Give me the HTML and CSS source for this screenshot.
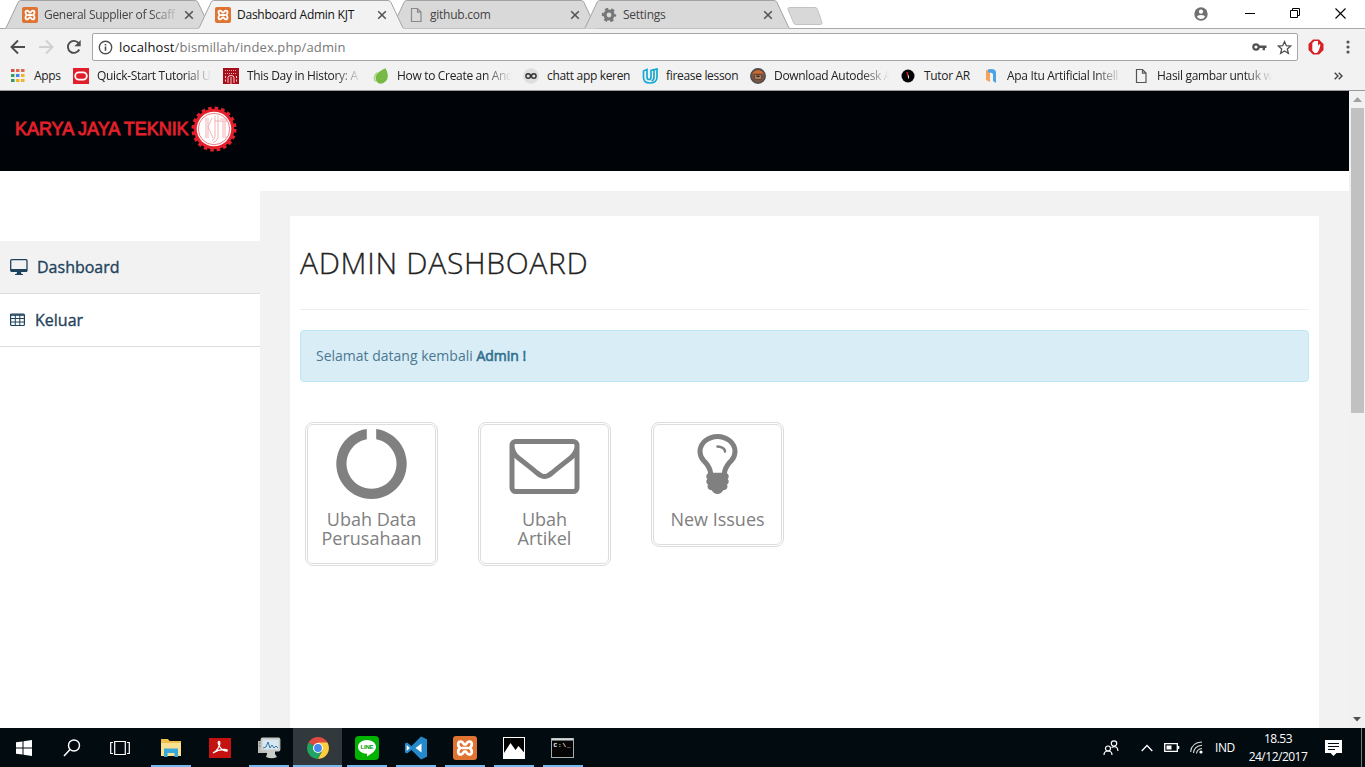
FILE: index.html
```html
<!DOCTYPE html>
<html lang="id">
<head>
<meta charset="utf-8">
<title>Dashboard Admin KJT</title>
<link rel="stylesheet" href="styles.css">
</head>
<body>
<svg class="defs" width="0" height="0">
  <symbol id="xampp" viewBox="0 0 16 16"><rect width="16" height="16" rx="2" fill="#df7332"/><path d="M5.400 3.700C3 3.300 2.800 6.800 5 8 2.800 9.200 3 12.700 5.400 12.300 7 12 6.700 10.300 8 10.300S9 12 10.600 12.300C13 12.700 13.200 9.200 11 8 13.200 6.800 13 3.300 10.600 3.700 9 4 9.300 5.700 8 5.700S7 4 5.400 3.700zM6 8h4" fill="none" stroke="#fff" stroke-width="1.800"/></symbol>
  <symbol id="file" viewBox="0 0 16 16"><path d="M3.500 1.500h6l3.500 3.500v9.500h-9.500zM9.500 1.500v3.700h3.500" fill="none" stroke="currentColor" stroke-width="1.200"/></symbol>
  <symbol id="close" viewBox="0 0 10 10"><path d="M1.200 1.200l7.600 7.600M8.800 1.200l-7.600 7.600" stroke="#555" stroke-width="1.600"/></symbol>
  <symbol id="tab" viewBox="0 0 206 29"><path d="M0 28.500L1.500 27 13 2.500Q14 .5 15.500 .5H190Q192 .5 193 2.500L204.500 27 206 28.500" stroke="#a3a3a3"/></symbol>
</svg>
<header class="browser">
  <div class="tabs">
    <div class="tab"><svg class="tab-bg"><use href="#tab"/></svg><svg class="ico"><use href="#xampp"/></svg><span class="tab-title t1">General Supplier of Scaff</span><svg class="x"><use href="#close"/></svg></div>
    <div class="tab active"><svg class="tab-bg"><use href="#tab"/></svg><svg class="ico"><use href="#xampp"/></svg><span class="tab-title t2">Dashboard Admin KJT</span><svg class="x"><use href="#close"/></svg></div>
    <div class="tab"><svg class="tab-bg"><use href="#tab"/></svg><svg class="ico grey"><use href="#file"/></svg><span class="tab-title t3">github.com</span><svg class="x"><use href="#close"/></svg></div>
    <div class="tab"><svg class="tab-bg"><use href="#tab"/></svg><svg class="ico" viewBox="0 0 16 16"><circle cx="8" cy="8" r="4" fill="none" stroke="#777" stroke-width="3.200"/><circle cx="8" cy="8" r="6" fill="none" stroke="#777" stroke-width="2.400" stroke-dasharray="3.200 3.083" stroke-dashoffset="1.600"/></svg><span class="tab-title t4">Settings</span><svg class="x"><use href="#close"/></svg></div>
    <svg class="newtab" viewBox="0 0 36 18"><path d="M3 .5h25q2 0 2.500 2L35 15.500q.5 2-1.500 2H9q-2 0-2.500-2L1 2.500Q.5 .5 3 .5z" fill="#d8d8d8" stroke="#c2c2c2"/></svg>
    <div class="window-buttons">
      <svg class="user" width="14" height="14" viewBox="0 0 14 14"><circle cx="7" cy="7" r="6.700" fill="#707070"/><circle cx="7" cy="4.700" r="2.100" fill="#fff"/><path d="M3 9.800Q3.300 8 7 8t4 1.800Q9.500 12 7 12T3 9.800z" fill="#fff"/></svg>
      <svg width="11" height="11" viewBox="0 0 11 11"><path d="M0 5.500h10" stroke="#000"/></svg>
      <svg width="11" height="11" viewBox="0 0 11 11"><path d="M.5 2.500h7v7h-7zM2.500 2.500v-2h7v7h-2" fill="none" stroke="#000"/></svg>
      <svg width="11" height="11" viewBox="0 0 11 11"><path d="M.5 .5l10 10M10.500 .5l-10 10" stroke="#000" stroke-width="1.100"/></svg>
    </div>
  </div>
  <div class="toolbar">
    <svg class="nav" viewBox="0 0 16 16"><path d="M15 8H2M8 1.500L1.500 8 8 14.500" fill="none" stroke="#4d4d4d" stroke-width="1.900"/></svg>
    <svg class="nav" viewBox="0 0 16 16"><path d="M1 8h13M8 1.500L14.500 8 8 14.500" fill="none" stroke="#d0d0d0" stroke-width="1.900"/></svg>
    <svg class="nav" viewBox="0 0 16 16"><path d="M13.300 10.500A6 6 0 1 1 12.500 4" fill="none" stroke="#4d4d4d" stroke-width="1.900"/><path d="M14.700 1v6.300H8.400z" fill="#4d4d4d"/></svg>
    <div class="address">
      <svg width="15" height="15" viewBox="0 0 15 15"><circle cx="7.500" cy="7.500" r="6.200" fill="none" stroke="#505050" stroke-width="1.400"/><path d="M7.500 6.600v4.200M7.500 3.900v1.600" stroke="#505050" stroke-width="1.600"/></svg>
      <span class="url"><b>localhost</b>/bismillah/index.php/admin</span>
      <svg width="15" height="14" viewBox="0 0 15 14"><circle cx="4" cy="7" r="2.700" fill="none" stroke="#505050" stroke-width="2.200"/><path d="M7 6.800h7.500M11.800 7v3.200" stroke="#505050" stroke-width="2.400"/></svg>
      <svg width="15" height="15" viewBox="0 0 15 15"><path d="M7.500 1.600l1.800 4.100 4.400.4-3.400 2.900 1.100 4.400-3.900-2.400-3.900 2.400 1.100-4.400L1.300 6.100l4.400-.4z" fill="none" stroke="#505050" stroke-width="1.300"/></svg>
    </div>
    <svg class="adblock" viewBox="0 0 16 16"><path d="M5 .5h6L15.500 5v6L11 15.500H5L.5 11V5z" fill="#d92027"/><path d="M4.300 4L6.500 2H10v5.500l1-2.500 1.500.8L11 11l-2 3H6.500L4.300 11.500z" fill="#fff"/></svg>
    <svg class="menu" width="4" height="14" viewBox="0 0 4 14"><g fill="#555"><circle cx="2" cy="2" r="1.600"/><circle cx="2" cy="7" r="1.600"/><circle cx="2" cy="12" r="1.600"/></g></svg>
  </div>
  <nav class="bookmarks">
    <a class="bm w62"><svg class="ico" viewBox="0 0 16 16"><path d="M0 1h3.500v3H0z" fill="#d85140"/><path d="M5 1h3.500v3H5zM10 1h3.500v3H10z" fill="#df6a50"/><path d="M0 6h3.500v3H0z" fill="#35a261"/><path d="M5 6h3.500v3H5z" fill="#4384ee"/><path d="M10 6h3.500v3H10zM5 11h3.500v3H5zM10 11h3.500v3H10z" fill="#f0b429"/><path d="M0 11h3.500v3H0z" fill="#2f9d5b"/></svg><span>Apps</span></a>
    <a class="bm w150"><svg class="ico" viewBox="0 0 16 16"><rect width="16" height="16" fill="#e11f2c"/><rect x="2.200" y="4.400" width="11.600" height="7.200" rx="3.600" fill="none" stroke="#fff" stroke-width="1.800"/></svg><span class="fade">Quick-Start Tutorial U</span></a>
    <a class="bm w150"><svg class="ico" viewBox="0 0 16 16"><rect width="16" height="16" fill="#a80d1c"/><path d="M2 2.500h12M2 5.500h12" stroke="#e9a6a6" stroke-dasharray="1 1"/><path d="M5 15V9.500q0-2 3-2t3 2V15M8 9v7M2.500 8v2M2.500 11.500v2M13.500 8v2M13.500 11.500v2" fill="none" stroke="#f2cccc"/></svg><span class="fade">This Day in History: A</span></a>
    <a class="bm w150"><svg class="ico" viewBox="0 0 16 16"><path d="M12.500 .3Q17 8 13 13 9.500 17 5 15 1 11 3.500 6.500 6 3 12.500 .3z" fill="#77b944"/><path d="M4.200 4.500Q-.5 9 2.500 13.500" fill="none" stroke="#acd784" stroke-width="1.500"/></svg><span class="fade">How to Create an And</span></a>
    <a class="bm w119"><svg class="ico" viewBox="0 0 16 16"><circle cx="8" cy="8" r="7.800" fill="#dedede"/><circle cx="5.200" cy="8" r="2.300" fill="none" stroke="#333" stroke-width="1.400"/><circle cx="10.800" cy="8" r="2.300" fill="none" stroke="#333" stroke-width="1.400"/></svg><span>chatt app keren</span></a>
    <a class="bm w108"><svg class="ico" viewBox="0 0 16 16"><path d="M1.500 3L5 1.500V9q0 2.500 2 2.500T9 9V2.500L15 1v8.500Q14.500 15 8 15 1.500 15 1.500 9.500zM12 2V9q0 3-2.500 4" fill="none" stroke="#17a9d1" stroke-width="1.700"/></svg><span>firease lesson</span></a>
    <a class="bm w150"><svg class="ico" viewBox="0 0 16 16"><circle cx="8" cy="8" r="7.200" fill="#7c5540" stroke="#4c4c50" stroke-width="1.500"/><path d="M2 5.500Q8-1 14 5.500z" fill="#d06a2b"/><path d="M4.500 6.500h7v5h-7z" fill="#a87b63" stroke="#6a4534"/><path d="M6.500 7.500h3v1.500h-3z" fill="#3b2118"/></svg><span class="fade">Download Autodesk A</span></a>
    <a class="bm w83"><svg class="ico" viewBox="0 0 16 16"><circle cx="8" cy="8" r="6.500" fill="#050505"/><path d="M7 4l1.400 5" stroke="#d02b2b" stroke-width="1.300"/><path d="M8.500 7.500v3" stroke="#ddd"/></svg><span>Tutor AR</span></a>
    <a class="bm w150"><svg class="ico" viewBox="0 0 16 16"><path d="M3 2.500L7 1v13l-4-2z" fill="#f5a35a"/><path d="M5 1.500Q12-.5 13 4v11l-3-2V6Q9.500 4 5 4.500z" fill="#4aa5e8"/></svg><span class="fade">Apa Itu Artificial Intell</span></a>
    <a class="bm w150"><svg class="ico dark"><use href="#file"/></svg><span class="fade">Hasil gambar untuk w</span></a>
    <svg class="more" width="9" height="8" viewBox="0 0 9 8"><path d="M.7 .7L4 4 .7 7.300M4.700 .7L8 4 4.700 7.300" fill="none" stroke="#444" stroke-width="1.400"/></svg>
  </nav>
</header>
<div class="viewport">
  <div class="page">
    <header class="brandbar">
      <span class="brand">KARYA JAYA TEKNIK</span>
      <svg class="gear" viewBox="0 0 46 46"><circle cx="23" cy="23" r="20.300" fill="#e3202b"/><circle cx="23" cy="23" r="20.800" fill="none" stroke="#e3202b" stroke-width="3.400" stroke-dasharray="3.600 2.934"/><circle cx="23" cy="23" r="17.300" fill="#fff"/><circle cx="23" cy="23" r="15.700" fill="#fff" stroke="#ee7d84" stroke-width="1"/><path d="M15 12v20M17 12v20M24 9.500v21q-.5 3-3 4M27 9.500v22q-1 4-5 5M21 12l-4 9 5 11M24 15h13M29 13h8M32 15v17M34 15v17" fill="none" stroke="#eda0a4" stroke-width=".8"/></svg>
    </header>
    <div class="columns">
      <aside class="sidebar">
        <a class="side-item current"><svg width="18" height="18" viewBox="0 0 18 18"><rect x=".7" y="1.700" width="16.300" height="11.500" rx="1" fill="none" stroke="#1f435c" stroke-width="1.300"/><path d="M1 11h16v3H1zM7 14h4l.5 2H13v1H5v-1h1.500z" fill="#1f435c"/></svg><span>Dashboard</span></a>
        <a class="side-item"><svg width="16" height="14" viewBox="0 0 16 14"><rect x=".6" y="1" width="13.800" height="11.500" rx="1" fill="none" stroke="#1f435c" stroke-width="1.200"/><path d="M1 2h13" stroke="#1f435c" stroke-width="1.600"/><path d="M1 5.500h13M1 9h13M5.300 2v10.500M9.800 2v10.500" stroke="#1f435c" stroke-width="1"/></svg><span>Keluar</span></a>
      </aside>
      <main class="content">
        <section class="panel">
          <h2>ADMIN DASHBOARD</h2>
          <hr>
          <div class="alert">Selamat datang kembali <strong>Admin !</strong></div>
          <div class="cards">
            <a class="card"><svg class="fa" viewBox="0 0 70 70"><path d="M30.300 0A35.200 35.200 0 1 0 39.700 0V10.200A25 25 0 1 1 30.300 10.200z" fill="#808080"/></svg><h4>Ubah Data Perusahaan</h4></a>
            <a class="card"><svg class="fa" viewBox="0 0 1792 1792"><path d="M1664 1504v-768q-32 36-69 66-268 206-426 338-51 43-83 67t-86.500 48.500-102.500 24.500h-2q-48 0-102.500-24.500t-86.500-48.500-83-67q-158-132-426-338-37-30-69-66v768q0 13 9.500 22.500t22.500 9.500h1472q13 0 22.500-9.500t9.500-22.500zm0-1051v-24.500l-.5-13-3-12.500-5.500-9-9-7.500-14-2.500h-1472q-13 0-22.500 9.500t-9.500 22.500q0 168 147 284 193 152 401 317 6 5 35 29.500t46 37.500 44.500 31.500 50.500 27.500 43 9h2q20 0 43-9t50.500-27.500 44.500-31.500 46-37.500 35-29.500q208-165 401-317 54-43 100.500-115.500t46.500-131.500zm128-37v1088q0 66-47 113t-113 47h-1472q-66 0-113-47t-47-113v-1088q0-66 47-113t113-47h1472q66 0 113 47t47 113z"/></svg><h4>Ubah Artikel</h4></a>
            <a class="card"><svg class="fa" viewBox="0 0 1792 1792"><path d="M1120 576q0 13-9.500 22.500t-22.500 9.500-22.500-9.500-9.500-22.500q0-46-54-71t-106-25q-13 0-22.500-9.500t-9.500-22.500 9.500-22.500 22.500-9.500q50 0 99.500 16t87 54 37.500 90zm160 0q0-72-34.500-134t-90-101.500-123-62-136.500-22.500-136.500 22.500-123 62-90 101.500-34.500 134q0 101 68 180 10 11 30.500 33t30.500 33q128 153 141 298h228q13-145 141-298 10-11 30.500-33t30.500-33q68-79 68-180zm128 0q0 155-103 268-45 49-74.500 87t-59.500 95.500-34 107.500q47 28 47 82 0 37-25 64 25 27 25 64 0 52-45 81 13 23 13 47 0 46-31.500 71t-77.500 25q-20 44-60 70t-87 26-87-26-60-70q-46 0-77.500-25t-31.500-71q0-24 13-47-45-29-45-81 0-37 25-64-25-27-25-64 0-54 47-82-4-50-34-107.500t-59.500-95.500-74.500-87q-103-113-103-268 0-99 44.500-184.500t117-142 164-89 186.500-32.500 186.500 32.500 164 89 117 142 44.500 184.500z"/></svg><h4>New Issues</h4></a>
          </div>
        </section>
      </main>
    </div>
  </div>
  <div class="scrollbar">
    <svg width="9" height="5" viewBox="0 0 9 5"><path d="M4.500 0L9 5H0z" fill="#a0a0a0"/></svg>
    <div class="thumb"></div>
    <svg class="down" width="8" height="5" viewBox="0 0 8 5"><path d="M0 0h8L4 4.500z" fill="#505050"/></svg>
  </div>
</div>
<footer class="taskbar">
  <div class="task sys"><svg width="16" height="16" viewBox="0 0 16 16"><path d="M0 2.300L6.500 1.400v6.100H0zM7.500 1.200L16 0v7.500H7.500zM0 8.500h6.500v6.100L0 13.700zM7.500 8.500H16V16l-8.500-1.200z" fill="#fff"/></svg></div>
  <div class="task sys"><svg width="18" height="18" viewBox="0 0 18 18"><circle cx="11" cy="6.500" r="5.500" fill="none" stroke="#fff" stroke-width="1.400"/><path d="M7 10.500L1 17" stroke="#fff" stroke-width="1.500"/></svg></div>
  <div class="task sys"><svg width="20" height="16" viewBox="0 0 20 16"><path d="M4.700 1.500h10.600v13H4.700zM3 2.500H.7v11H3M17 2.500h2.300v11H17" fill="none" stroke="#fff" stroke-width="1.200"/></svg></div>
  <div class="task open"><svg width="22" height="20" viewBox="0 0 22 20"><path d="M1 1h7l1.500 2H21v15H1z" fill="#eebf4a"/><path d="M1 5h20v13H1z" fill="#fae092"/><path d="M4 10.500h14V19h-3.500v-4h-7v4H4z" fill="#36a8dc"/></svg></div>
  <div class="task"><svg width="22" height="20" viewBox="0 0 22 20"><rect width="22" height="20" fill="#c3120f"/><path d="M4 15Q7 14 9.500 9.500 12 4 10 3.500 8 4 11 9q3 4.500 7 4 1-1.500-2.500-1.500Q9 11.500 4 15z" fill="none" stroke="#fff" stroke-width="1.300"/></svg></div>
  <div class="task open"><svg width="24" height="22" viewBox="0 0 24 22"><path d="M1 4h9v12H1z" fill="#b9bcb5"/><path d="M2 6h5M2 9h5" stroke="#676b6b"/><rect x="4.500" y="1.500" width="18" height="12" rx="1" fill="#d8e7f1" stroke="#c6c8c3" stroke-width="1.800"/><path d="M6 11l3-1 2-5 2 6 2-3 2 3 2-2 2 2" fill="none" stroke="#3476aa"/><path d="M10 14h8v3l2 3q-5 2.500-11 0l1-3z" fill="#c9cbc7"/></svg></div>
  <div class="task chrome"><svg width="22" height="22" viewBox="0 0 22 22"><path d="M11 11L1.500 5.500A11 11 0 0 1 20.500 5.500z" fill="#e04a3f"/><path d="M11 11L1.500 5.500A11 11 0 0 0 11 22l4-8z" fill="#21a464"/><path d="M11 11l4.500 2.500L11 22A11 11 0 0 0 20.500 5.500H11z" fill="#fccd3c"/><circle cx="11" cy="11" r="5" fill="#fff"/><circle cx="11" cy="11" r="3.900" fill="#4589ee"/></svg></div>
  <div class="task open"><svg width="24" height="24" viewBox="0 0 24 24"><rect width="24" height="24" rx="4" fill="#00b300"/><path d="M12 4c5 0 9 3 9 7 0 4.500-6 7.500-9 9.500v-2.700C7 17.500 3 15 3 11s4-7 9-7z" fill="#fff"/><text x="5.500" y="13.300" font-family="Liberation Sans" font-size="6" font-weight="700" fill="#00a000" textLength="13">LINE</text></svg></div>
  <div class="task open"><svg width="24" height="24" viewBox="0 0 24 24"><path d="M17 .5l6 2.700v17.600L17 23.500 7.500 14 3 17.500 1 16.500v-9l2-1L7.500 10z" fill="#2489ca"/><path d="M2.700 9l3.300 3-3.300 3zM17.500 7.500v9L11.500 12z" fill="#fff"/></svg></div>
  <div class="task open"><svg width="24" height="24"><use href="#xampp"/></svg></div>
  <div class="task open"><svg width="22" height="22" viewBox="0 0 22 22"><rect x=".5" y=".5" width="21" height="21" fill="#000" stroke="#fff"/><path d="M1 16L7.500 6l5 7 3-4 6 7v5.500H1z" fill="#fff"/></svg></div>
  <div class="task open"><svg width="23" height="20" viewBox="0 0 23 20"><rect x=".5" y=".5" width="22" height="19" fill="#050505" stroke="#a6abac"/><path d="M1 1.500h21" stroke="#d7dadb" stroke-width="2"/><text x="2.500" y="8.500" font-family="Liberation Mono" font-size="6" font-weight="700" fill="#fff" textLength="17">C:\_</text></svg></div>
  <div class="tray">
    <svg width="16" height="16" viewBox="0 0 16 16"><g fill="none" stroke="#fff" stroke-width="1.200"><circle cx="5" cy="8.500" r="2.500"/><path d="M1 15q0-4 4-4t4 4"/><circle cx="11" cy="3.500" r="2.700"/><path d="M8.500 7.500Q14.500 4.800 15 11"/></g></svg>
    <svg class="caret" width="12" height="8" viewBox="0 0 12 8"><path d="M.7 7L6 1.500 11.300 7" fill="none" stroke="#fff" stroke-width="1.300"/></svg>
    <svg class="battery" width="16" height="9" viewBox="0 0 16 9"><path d="M.7 .7h12.600v7.600H.7z" fill="none" stroke="#fff" stroke-width="1.300"/><path d="M2.500 2.500h5v4h-5zM14 3h1.300v3H14z" fill="#fff"/></svg>
    <svg class="wifi" width="13" height="13" viewBox="0 0 13 13"><g fill="none" stroke="#ddd" stroke-width="1.100"><path d="M.6 11Q1.500 1.500 12 1M3.500 12Q4 5 12 4.200M6.500 12.500Q7 8 12 7.500"/></g><circle cx="11" cy="11" r="1.600" fill="#fff"/></svg>
    <span class="lang">IND</span>
    <div class="clock"><span class="time">18.53</span><span class="date">24/12/2017</span></div>
    <svg class="note" width="17" height="16" viewBox="0 0 17 16"><path d="M0 0h17v13h-5.500L8.500 16l-3-3H0z" fill="#fff"/><path d="M3 3.500h11M3 6.500h11M3 9.500h7" stroke="#020b10" stroke-width="1.100"/></svg>
    <div class="peek"></div>
  </div>
</footer>
</body>
</html>
```

FILE: styles.css
```css
* { box-sizing: border-box; }
body { margin: 0; width: 1365px; height: 767px; overflow: hidden; display: flex; flex-direction: column; background: #fff; font-family: "Open Sans", sans-serif; font-size: 12px; color: #222; }
svg { display: block; flex: none; }
.defs { position: absolute; }
.ico { width: 16px; height: 16px; }
.grey { color: #8a8a8a; }
.dark { color: #555; }

.browser { height: 91px; flex: none; background: #f2f2f2; border-bottom: 1px solid #999; }
.tabs { height: 29px; display: flex; background: linear-gradient(#fff 28px, #a9a9a9 28px); padding-left: 5px; }
.tab { position: relative; width: 206px; height: 29px; margin-right: -13px; padding: 1px 0 0 17px; display: flex; align-items: center; color: #444; }
.tab-bg { position: absolute; left: 0; top: 0; width: 206px; height: 29px; z-index: 0; fill: #d9d9d9; }
.tab > :not(.tab-bg) { position: relative; z-index: 1; }
.tab.active { z-index: 2; color: #111; }
.tab.active .tab-bg { fill: #f2f2f2; }
.tab.active::after { content: ""; position: absolute; left: 1px; right: 1px; bottom: 0; height: 1px; background: #f2f2f2; }
.tab-title { width: 136px; margin: 0 4px 2px 6px; white-space: nowrap; }
.x { width: 10px; height: 10px; }
.t1 { letter-spacing: -.3px; -webkit-mask-image: linear-gradient(90deg, #000 78%, transparent); }
.t2, .t3, .t4 { letter-spacing: -.25px; }
.newtab { width: 36px; height: 18px; margin: 7px 0 0 10px; }
.window-buttons { margin-left: auto; display: flex; align-items: center; height: 27px; gap: 34px; padding-right: 19px; }
.user { margin-right: 3px; }

.toolbar { height: 32px; display: flex; align-items: center; padding: 4px 15px 0 10px; }
.nav { width: 16px; height: 16px; margin-right: 12px; }
.nav:nth-child(3) { margin-right: 10px; }
.address { width: 1206px; height: 28px; border: 1px solid #a6a6a6; border-radius: 2px; background: #fff; display: flex; align-items: center; gap: 10px; padding: 0 5px; }
.url { flex: 1; margin-left: -4px; font-size: 13px; letter-spacing: .12px; color: #777; }
.url b { font-weight: 400; color: #111; }
.adblock { width: 16px; height: 16px; margin-left: 10px; }
.menu { margin-left: auto; }
.bookmarks { height: 29px; display: flex; align-items: center; padding-left: 11px; }
.bm { display: flex; align-items: center; gap: 8px; flex: none; white-space: nowrap; color: #222; }
.bm span { letter-spacing: -.32px; }
.bm:first-child { gap: 7px; }
.w62 { width: 62px; } .w83 { width: 83px; } .w108 { width: 108px; } .w119 { width: 119px; } .w150 { width: 150px; }
.bm .fade { width: 115px; -webkit-mask-image: linear-gradient(90deg, #000 76%, transparent); }
.more { margin: 0 22px 0 auto; }

.viewport { height: 637px; flex: none; display: flex; overflow: hidden; }
.page { width: 1349px; height: 637px; display: flex; flex-direction: column; }
.brandbar { height: 80px; flex: none; background: #000408; display: flex; padding: 15px; }
.brand { width: 176px; font: 400 18px/46px "Liberation Sans", sans-serif; color: #e3202b; letter-spacing: -.05px; white-space: nowrap; -webkit-text-stroke: .8px #e3202b; }
.gear { width: 46px; height: 46px; }
.columns { flex: 1; margin-top: 20px; display: flex; min-height: 0; }
.sidebar { width: 260px; padding-top: 50px; }
.side-item { height: 53px; display: flex; align-items: center; gap: 9px; padding-left: 10px; border-bottom: 1px solid #ddd; font-size: 16px; color: #1f435c; -webkit-text-stroke: .35px #1f435c; }
.current { background: #f2f2f2; }
.content { flex: 1; background: #f2f2f2; padding: 25px 30px 0; }
.panel { height: 100%; background: #fff; padding: 30px 10px 0; }
h2 { margin: 0; font-size: 30px; line-height: 33px; font-weight: 300; letter-spacing: .7px; color: #222; -webkit-text-stroke: .3px #222; }
hr { margin: 30px 0 20px; border: 0; border-top: 1px solid #eee; }
.alert { height: 52px; border: 1px solid #bce8f1; border-radius: 4px; background: #d9edf7; padding: 15px; line-height: 20px; font-size: 14px; color: #4b7890; }
.alert strong { font-weight: 400; color: #31708f; -webkit-text-stroke: .6px #31708f; }
.cards { display: flex; align-items: flex-start; gap: 40px; margin: 40px 0 0 5px; }
.card { width: 133px; border: 3px double #ddd; border-radius: 8px; padding: 4px 12px 15px; text-align: center; color: #808080; }
.fa { width: 71px; height: 70px; margin: 0 auto; fill: #808080; overflow: visible; }
h4 { margin: 11px 0 0; font-size: 18px; line-height: 19px; font-weight: 400; }
.scrollbar { width: 16px; background: #f1f1f1; display: flex; flex-direction: column; align-items: center; padding: 6px 0; }
.thumb { width: 13px; height: 305px; margin-top: 6px; background: #c1c1c1; }
.down { margin-top: auto; }

.taskbar { height: 39px; flex: none; display: flex; background: #020b10; color: #fff; }
.task { width: 49px; display: flex; align-items: center; justify-content: center; position: relative; }
.sys { width: 48px; }
.sys:nth-child(3) { margin-right: 2px; }
.open::after, .chrome::after { content: ""; position: absolute; left: 5px; right: 4px; bottom: 0; height: 2px; background: #76b9ed; }
.chrome { background: #32393d; }
.chrome::after { left: 0; right: 0; }
.tray { margin-left: auto; display: flex; align-items: center; }
.caret { margin-left: 22px; }
.battery { margin-left: 11px; }
.wifi { margin-left: 10px; }
.lang { margin-left: 12px; width: 21px; letter-spacing: -.4px; }
.clock { width: 60px; margin-left: 12px; display: flex; flex-direction: column; align-items: center; line-height: 18px; }
.time, .date { letter-spacing: -.5px; white-space: nowrap; }
.note { margin-left: 17px; }
.peek { width: 4px; height: 39px; margin-left: 19px; border-left: 1px solid #737a7d; }
```
